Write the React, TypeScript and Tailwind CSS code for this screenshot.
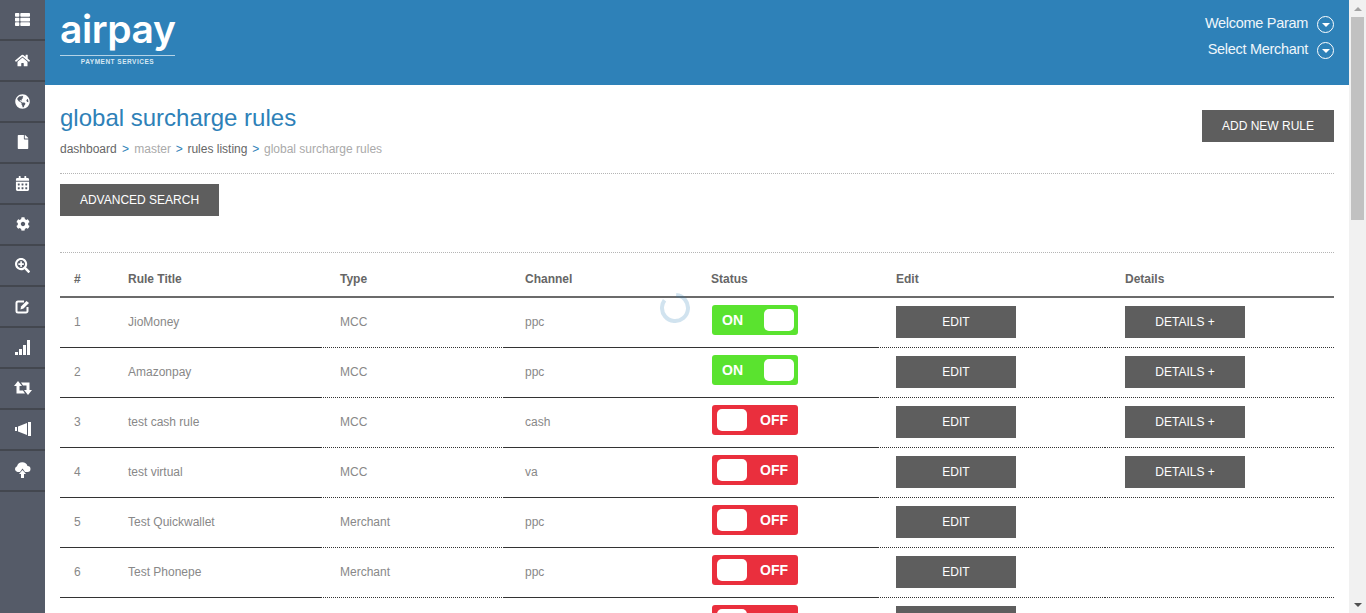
import React from 'react';
import {
  FaThList,
  FaHome,
  FaGlobeAmericas,
  FaFile,
  FaCalendarAlt,
  FaCog,
  FaSearchPlus,
} from 'react-icons/fa';

type Rule = {
  id: string;
  title: string;
  type: string;
  channel: string;
  on: boolean;
  details: boolean;
};

const rules: Rule[] = [
  { id: '1', title: 'JioMoney', type: 'MCC', channel: 'ppc', on: true, details: true },
  { id: '2', title: 'Amazonpay', type: 'MCC', channel: 'ppc', on: true, details: true },
  { id: '3', title: 'test cash rule', type: 'MCC', channel: 'cash', on: false, details: true },
  { id: '4', title: 'test virtual', type: 'MCC', channel: 'va', on: false, details: true },
  { id: '5', title: 'Test Quickwallet', type: 'Merchant', channel: 'ppc', on: false, details: false },
  { id: '6', title: 'Test Phonepe', type: 'Merchant', channel: 'ppc', on: false, details: false },
  { id: '', title: '', type: '', channel: '', on: false, details: false },
];

const EditIcon = () => (
  <svg width="15" height="15" viewBox="0 0 15 15" fill="none">
    <path d="M9 2.5H3a1.5 1.5 0 0 0-1.5 1.5v8A1.5 1.5 0 0 0 3 13.5h8a1.5 1.5 0 0 0 1.5-1.5V8" stroke="white" strokeWidth="2" />
    <path d="M6 7.5 11.5 2 14 4 8.5 9.5 5.5 10.5Z" fill="white" />
  </svg>
);

const SignalIcon = () => (
  <svg width="15" height="15" viewBox="0 0 15 15" fill="white">
    <rect x="0" y="12" width="3" height="3" />
    <rect x="4" y="9" width="3" height="6" />
    <rect x="8" y="5" width="3" height="10" />
    <rect x="12" y="0" width="3" height="15" />
  </svg>
);

const RetweetIcon = () => (
  <svg width="18" height="16" viewBox="0 0 18 16" fill="white">
    <path d="M4 1 8 6H5.5V10.5H9L11 13.5H2.5V6H0Z" />
    <path d="M14 15 10 10H12.5V5.5H9L7 2.5H15.5V10H18Z" />
  </svg>
);

const BullhornIcon = () => (
  <svg width="16" height="14" viewBox="0 0 16 14" fill="white">
    <rect x="0" y="5" width="2" height="4" />
    <path d="M3 4.5 12 1V13L3 9.5Z" />
    <rect x="13" y="0" width="3" height="14" />
  </svg>
);

const CloudUpIcon = () => (
  <svg width="17" height="16" viewBox="0 0 17 16" fill="none">
    <path
      d="M3.5 10A3 3 0 0 1 3 4.2 5.5 5.5 0 0 1 13.5 4 3 3 0 0 1 13.5 10H11L8.5 6.5 6 10Z"
      fill="white"
    />
    <path d="M8.5 8 12 12H10V16H7V12H5Z" fill="white" />
  </svg>
);

const navIcons = [
  <FaThList size={15} />,
  <FaHome size={15} />,
  <FaGlobeAmericas size={15} />,
  <FaFile size={14} />,
  <FaCalendarAlt size={15} />,
  <FaCog size={14} />,
  <FaSearchPlus size={15} />,
  <EditIcon />,
  <SignalIcon />,
  <RetweetIcon />,
  <BullhornIcon />,
  <CloudUpIcon />,
];

const gridCols = 'grid grid-cols-[54px_207px_183px_186px_187px_228px_229px]';
const btn =
  'flex items-center justify-center h-8 bg-[#5e5e5e] text-white text-[12px] font-medium uppercase';

const UserMenu = ({ label }: { label: string }) => (
  <div className="flex items-center h-[26px]">
    <span className="text-[14.5px] tracking-[-0.3px] text-[#eef6fb]">{label}</span>
    <span className="ml-[9px] flex items-center justify-center w-[17px] h-[17px] rounded-full border border-white">
      <span className="mt-[2px] w-0 h-0 border-x-[4px] border-x-transparent border-t-[4px] border-t-white" />
    </span>
  </div>
);

const Toggle = ({ on }: { on: boolean }) =>
  on ? (
    <div className="flex items-center justify-between w-[86px] h-[30px] mb-[5px] ml-px pl-[10px] pr-1 rounded-[3px] bg-[#5ae32f] text-white text-[14px] font-bold">
      <span>ON</span>
      <span className="w-[30px] h-[22px] rounded-[5px] bg-white" />
    </div>
  ) : (
    <div className="flex items-center justify-between w-[86px] h-[30px] mb-[5px] ml-px pl-[5px] pr-[10px] rounded-[3px] bg-[#ea2f3d] text-white text-[14px] font-bold">
      <span className="w-[30px] h-[22px] rounded-[5px] bg-white" />
      <span>OFF</span>
    </div>
  );

const App = () => {
  return (
    <div className="relative flex h-screen overflow-hidden bg-white font-['Liberation_Sans',Arial,sans-serif]">
      {/* side nav */}
      <div className="w-[45px] shrink-0 bg-[#555b68]">
        {navIcons.map((icon, i) => (
          <div
            key={i}
            className="flex items-center justify-center h-[41px] pb-px border-b-2 border-b-[#43474f] text-white"
          >
            {icon}
          </div>
        ))}
      </div>

      <div className="flex-1 min-w-0">
        {/* header */}
        <div className="flex justify-between h-[85px] px-[15px] bg-[#2e81b8]">
          <div className="w-[115px] pt-[9px] text-white">
            <div className="h-[47px] text-[39px] leading-[39px] font-['Inter',sans-serif] font-semibold tracking-[-0.4px] border-b border-b-[#b4d3e7]">
              airpay
            </div>
            <div className="mt-[2px] text-center text-[6.5px] leading-[8px] font-bold tracking-[0.5px] text-[#d7e8f3]">
              PAYMENT SERVICES
            </div>
          </div>
          <div className="flex flex-col items-end pt-[11px]">
            <UserMenu label="Welcome Param" />
            <UserMenu label="Select Merchant" />
          </div>
        </div>

        <div className="px-[15px]">
          {/* page title */}
          <div className="flex justify-between h-[89px] border-b border-dotted border-b-[#b5b5b5]">
            <div className="pt-[18px]">
              <h1 className="text-[24px] leading-[30px] text-[#2e81b8]">global surcharge rules</h1>
              <div className="flex items-center mt-[8px] text-[12px] leading-4">
                <span className="text-[#666]">dashboard</span>
                <span className="mx-[5.25px] text-[#2e81b8]">&gt;</span>
                <span className="text-[#aaa]">master</span>
                <span className="mx-[4.75px] text-[#2e81b8]">&gt;</span>
                <span className="text-[#666]">rules listing</span>
                <span className="mx-[4.75px] text-[#2e81b8]">&gt;</span>
                <span className="text-[#aaa]">global surcharge rules</span>
              </div>
            </div>
            <button className={`${btn} w-[132px] mt-[25px]`}>Add New Rule</button>
          </div>

          <button className={`${btn} w-[159px] mt-[10px]`}>Advanced Search</button>

          <div className="mt-[36px] border-t border-dotted border-t-[#b5b5b5]">
            {/* table head */}
            <div className={`${gridCols} h-[45px] pt-[9px] border-b-2 border-b-[#6b6b6b] text-[12px] font-bold text-[#666]`}>
              <div className="flex items-center pl-[14px]">#</div>
              <div className="flex items-center pl-[14px]">Rule Title</div>
              <div className="flex items-center pl-[19px]">Type</div>
              <div className="flex items-center pl-[21px]">Channel</div>
              <div className="flex items-center pl-[21px]">Status</div>
              <div className="flex items-center pl-[19px]">Edit</div>
              <div className="flex items-center pl-[20px]">Details</div>
            </div>

            {rules.map((rule, i) => (
              <div key={i} className={`${gridCols} h-[50px] text-[12px] text-[#888]`}>
                <div className="flex items-center pl-[14px] pb-[2px] border-b border-b-[#333]">{rule.id}</div>
                <div className="flex items-center pl-[14px] pb-[2px] border-b border-b-[#333]">{rule.title}</div>
                <div className="flex items-center pl-[19px] pb-[2px] border-b border-dotted border-b-[#333]">{rule.type}</div>
                <div className="flex items-center pl-[21px] pb-[2px] border-b border-b-[#333]">{rule.channel}</div>
                <div className="flex items-center pl-[21px] border-b border-b-[#333]">
                  <Toggle on={rule.on} />
                </div>
                <div className="flex items-center pl-[19px] border-b border-dotted border-b-[#333]">
                  <button className={`${btn} w-[120px] mb-px`}>Edit</button>
                </div>
                <div className="flex items-center pl-[20px] border-b border-dotted border-b-[#333]">
                  {rule.details && <button className={`${btn} w-[120px] mb-px`}>Details +</button>}
                </div>
              </div>
            ))}
          </div>
        </div>
      </div>

      {/* window scrollbar */}
      <div className="flex flex-col items-center w-[17px] shrink-0 bg-[#f1f1f1]">
        <div className="flex items-center justify-center h-[17px]">
          <span className="w-0 h-0 border-x-[4px] border-x-transparent border-b-[4px] border-b-[#a3a3a3]" />
        </div>
        <div className="w-[13px] h-[203px] bg-[#c1c1c1]" />
        <div className="flex-1" />
        <div className="flex items-center justify-center h-[17px]">
          <span className="w-0 h-0 border-x-[4px] border-x-transparent border-t-[4px] border-t-[#505050]" />
        </div>
      </div>

      {/* loading spinner over the table */}
      <svg className="absolute left-[660px] top-[293px]" width="30" height="30" viewBox="0 0 30 30">
        <circle
          cx="15"
          cy="15"
          r="13"
          fill="none"
          stroke="#2e81b8"
          strokeOpacity="0.22"
          strokeWidth="4"
          strokeDasharray="68 14"
          transform="rotate(-85 15 15)"
        />
      </svg>
    </div>
  );
};

export default App;
